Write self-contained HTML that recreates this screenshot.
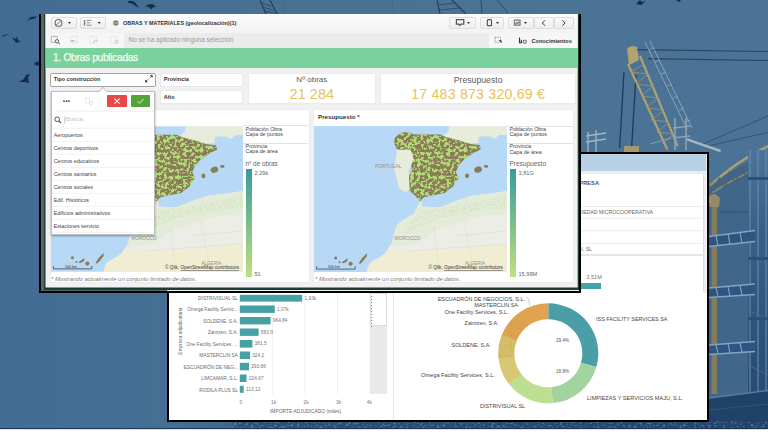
<!DOCTYPE html>
<html><head><meta charset="utf-8">
<style>
*{margin:0;padding:0;box-sizing:border-box}
html,body{width:768px;height:432px;overflow:hidden;background:#fff}
body{position:relative;font-family:"Liberation Sans",sans-serif;color:#333}
.a{position:absolute}
.t{position:absolute;white-space:nowrap;line-height:1}
.btn{border:1px solid #dcdcdc;border-radius:2px;background:linear-gradient(#fbfbfb,#ededed)}
</style></head><body>
<svg class="a" style="left:0;top:0" width="768" height="432" viewBox="0 0 768 432">
<defs>
 <linearGradient id="twr" x1="0" y1="0" x2="0" y2="1"><stop offset="0" stop-color="#4d7399"/><stop offset="0.3" stop-color="#36608a"/><stop offset="1" stop-color="#234670"/></linearGradient>
 <linearGradient id="bgg" x1="0" y1="0" x2="1" y2="0"><stop offset="0" stop-color="#426c93"/><stop offset="0.45" stop-color="#497294"/><stop offset="1" stop-color="#4a7396"/></linearGradient>
 <linearGradient id="bot" x1="0" y1="0" x2="1" y2="0"><stop offset="0" stop-color="#3b638b" stop-opacity="0"/><stop offset="0.105" stop-color="#3b638b" stop-opacity="0.6"/><stop offset="0.135" stop-color="#2c4f77"/><stop offset="1" stop-color="#22446c"/></linearGradient>
 <filter id="spk" x="0" y="0" width="1" height="1" color-interpolation-filters="sRGB">
  <feTurbulence type="fractalNoise" baseFrequency="0.35 0.6" numOctaves="2" seed="3" result="n"/>
  <feColorMatrix in="n" type="matrix" values="0 0 0 0 0.45  0 0 0 0 0.58  0 0 0 0 0.72  6 0 0 0 -3.2" result="g"/>
  <feComposite in="g" in2="SourceGraphic" operator="in"/>
 </filter>
</defs>
<rect x="0" y="0" width="768" height="430" fill="url(#bgg)"/>
<!-- birds -->
<g fill="#152d4b">
 <path d="M26.6 20.8 L31 17 L37 16.2 L35 18.5 L30 19.5Z"/>
 <path d="M2.3 36 Q5 33.6 9.3 34.5 L5 35.5 L3 37Z"/>
 <path d="M11.6 37 L16 39 L17 36 L18 40 L20.8 41.5 L16 42.8 L14 40Z"/>
 <path d="M33.6 64 L37 61.3 L40.5 63 L38 66Z"/>
 <path d="M18.5 82 L24 79 L26 75 L30 74 L28 78 L29 83 L24 82Z"/>
 <path d="M127.2 1.6 L131 0.8 L134.5 1.8 L137 5 L138.9 7.8 L135.5 6 L132 3.5 L129 3Z"/>
 <path d="M145.2 6 L149 4.2 L152.5 4 L156 6.5 L153 7.5 L151 9.5 L149.5 7.5Z"/>
 <path d="M636 4 L640 0 L642 2 L646 1 L641 5Z"/>
 <path d="M676 0 L681 0 L679 2Z"/>
</g>
<!-- top lattice towers -->
<g stroke="#22405f" stroke-width="1.2" fill="none">
 <path d="M260 0 L266 14 M270 0 L277 14"/>
 <path d="M261 3 L271 6 M262 7 L273 10 M264 11 L275 13" stroke-width="0.7"/>
 <path d="M437 0 L440 14 M452 0 L466 14"/>
 <path d="M438 5 L455 3 M439 10 L460 8" stroke-width="0.7"/>
 <path d="M481 0 L482 14 M497 0 L508 13" stroke-width="0.8"/>
 <path d="M283 0 L285 14 M392 0 L394 14" stroke="#3b6183" stroke-width="0.6"/>
</g>
<!-- right crane -->
<g fill="none">
 <path d="M636 49.6 L768 51.5 M648 58.6 L768 60.5" stroke="#2a4563" stroke-width="1.1"/>
 <path d="M624 72 L619.6 148 M636 75 L631.6 148" stroke="#1f3a5a" stroke-width="1.3"/>
 <path d="M628 64 L667.4 149.8 M640 56 L677.8 146.3" stroke="#b0a170" stroke-width="2.2"/>
 <path d="M631 72 L644 64 M631 72 L648 74 M636 84 L648 74 M636 84 L653 86 M641 96 L653 86 M641 96 L658 98 M646 108 L658 98 M646 108 L664 110 M651 120 L664 110 M651 120 L669 122 M657 132 L669 122 M657 132 L674 134 M662 144 L674 134" stroke="#9c9070" stroke-width="0.9"/>
 <path d="M645 42 L687 129 M650 41 L692 128" stroke="#9aaec0" stroke-width="0.8"/>
 <path d="M649 50 L654 48 M655 62 L660 60 M661 74 L666 72 M667 86 L672 84 M673 98 L678 96 M679 110 L684 108 M685 122 L690 120" stroke="#9aaec0" stroke-width="0.7"/>
 <path d="M703 144 L768 116 M708 146 L768 132.4 M720 212 L768 212" stroke="#2c4766" stroke-width="0.7"/>
 <path d="M650 144 L671 138" stroke="#8f9a98" stroke-width="1.2"/>
 <path d="M687 139.4 L720.6 151" stroke="#a8b4be" stroke-width="2.4"/>
 <path d="M586 136 L606 133 M586 142 L606 139 M596 130 L596 152 M588 132 L588 152" stroke="#a4b5c6" stroke-width="1.3"/>
 <path d="M675 118 L675 150 M686 118 L686 150 M673 128 L690 126 M673 138 L690 136" stroke="#8ea3b6" stroke-width="1.6"/>
</g>
<path d="M627 49 Q631 44 637 47 L639 60 L629 65Z" fill="#b3a272"/>
<path d="M624 146 L639 146 L639 152 L624 152Z" fill="#a69870"/>
<!-- arc lattice -->
<path d="M710 185.6 Q738 160 768 146.3" fill="none" stroke="#ab9f72" stroke-width="2.6"/>
<path d="M712.5 192.6 Q738 176 761 167" fill="none" stroke="#a49a72" stroke-width="1.8"/>
<path d="M714 191 L719 178 L725 188 L729 172 L736 183 L740 166 L747 178 L751 160 L757 172 L760 154" fill="none" stroke="#5d6a72" stroke-width="1.3"/>
<!-- darker overlay right lower -->
<path d="M700 190 L768 150 L768 430 L700 430Z" fill="#14305a" opacity="0.18"/>
<!-- tan column -->
<rect x="711.5" y="198" width="5.5" height="196" fill="#857c60"/>
<path d="M708 198 Q713 190 720 198 L719 207 L710 207Z" fill="#948a6a"/>
<!-- right tower -->
<rect x="748" y="150" width="20" height="280" fill="url(#twr)"/>
<path d="M750 150 L750 395 M758 150 L758 395 M766 145 L766 395" stroke="#6f8fae" stroke-width="1"/>
<path d="M748 165 L768 175 M748 195 L768 205 M748 255 L768 265 M748 310 L768 320 M748 365 L768 375" stroke="#4d6f92" stroke-width="0.8"/>
<g fill="#2c5079">
 <rect x="748" y="177" width="20" height="3"/><rect x="748" y="257" width="20" height="3"/><rect x="748" y="317" width="20" height="3"/>
</g>
<!-- horizontal arms -->
<g>
 <path d="M709 236 L755 230 L755 242 L709 247Z" fill="#2d5580"/>
 <path d="M709 236.5 L755 230.5 M709 246.5 L755 241.5" stroke="#86a4c1" stroke-width="1.6" fill="none"/>
 <path d="M716 235.6 L718 245.6 M728 234 L730 244.3 M740 232.5 L742 243" stroke="#86a4c1" stroke-width="1.1" fill="none"/>
 <path d="M709 287.5 L755 283.5 L755 295 L709 298Z" fill="#2d5580"/>
 <path d="M709 288 L755 284 M709 297.5 L755 294.5" stroke="#86a4c1" stroke-width="1.6" fill="none"/>
 <path d="M716 287.4 L718 297 M728 286.3 L730 296.2 M740 285.2 L742 295.4" stroke="#86a4c1" stroke-width="1.1" fill="none"/>
 <path d="M709 344.5 L755 341 L755 352 L709 355Z" fill="#2d5580"/>
 <path d="M709 345 L755 341.5 M709 354.5 L755 351.5" stroke="#86a4c1" stroke-width="1.6" fill="none"/>
 <path d="M716 344.4 L718 354 M728 343.5 L730 353.2 M740 342.6 L742 352.4" stroke="#86a4c1" stroke-width="1.1" fill="none"/>
</g>
<!-- base -->
<path d="M709 397.7 L768 390 L768 430 L709 430Z" fill="#204168"/>
<path d="M709 398 L768 390.5" stroke="#5a7c9e" stroke-width="1.4"/>
<path d="M709 410 L768 404" stroke="#2f5279" stroke-width="1.4"/>
<!-- bottom strip -->
<rect x="160" y="421" width="608" height="7.5" fill="url(#bot)"/>
<rect x="228" y="421" width="540" height="7.5" fill="#000" filter="url(#spk)" opacity="0.55"/>
<rect x="0" y="428.2" width="768" height="1" fill="#1a2f4a"/>
<rect x="0" y="429.2" width="768" height="2.8" fill="#ffffff"/>

</svg>
<!-- screenshot 2 (behind) -->
<div class="a" style="left:167px;top:152px;width:542px;height:269.8px;background:#000"></div>
<div class="a" style="left:169px;top:154px;width:537.5px;height:266px;background:#fff"></div>
<div class="a" style="left:0;top:0;width:768px;height:432px;clip-path:inset(154px 61.5px 12px 169px)">
<div class="a" style="left:0;top:0;width:768px;height:432px;background:#fff"></div>
<div class="a" style="left:160px;top:153px;width:560px;height:18.4px;background:#b9d1e6"></div>
<div class="a" style="left:160px;top:171.4px;width:560px;height:3px;background:#ececec"></div>
<div class="a" style="left:703.8px;top:171px;width:4px;height:122px;background:#ececec"></div>
<div class="a" style="left:703.3px;top:174.3px;width:0.7px;height:118px;background:#dedede"></div>
<div class="t" style="right:169px;top:181.3px;font-size:5.7px;font-weight:bold;color:#555">EMPRESA</div>
<svg class="a" style="left:0;top:0" width="768" height="432">
 <g stroke="#e4e4e4" stroke-width="0.7">
  <line x1="560" y1="206.5" x2="703" y2="206.5"/>
  <line x1="560" y1="218.3" x2="703" y2="218.3"/>
  <line x1="560" y1="230.8" x2="703" y2="230.8"/>
  <line x1="560" y1="243.3" x2="703" y2="243.3"/>
 </g>
 <line x1="560" y1="255" x2="703" y2="255" stroke="#dcdcdc" stroke-width="1.6"/>
</svg>
<div class="t" style="right:115px;top:209.6px;font-size:5.2px;color:#666">SOCIEDAD MICROCOOPERATIVA</div>
<div class="t" style="right:176px;top:246.8px;font-size:5.2px;color:#666">MAJU, SL</div>
<div class="t" style="left:586.3px;top:275px;font-size:5.6px;color:#777">3,51M</div>
<div class="a" style="left:560px;top:283px;width:41.3px;height:5.5px;background:#45a3a6"></div>
<!-- lower: bar chart -->
<div class="a" style="left:370px;top:293px;width:16.5px;height:33px;background:#fff;border:0.7px solid #ddd"></div>
<div class="a" style="left:370px;top:326px;width:16.5px;height:67.5px;background:#e9e9e9"></div>
<svg class="a" style="left:0;top:0" width="768" height="432">
 <line x1="371.6" y1="296" x2="371.6" y2="327" stroke="#4aa3a8" stroke-width="1" stroke-dasharray="1.2 1.8"/>
 <line x1="393.3" y1="293" x2="393.3" y2="419" stroke="#e0e0e0" stroke-width="0.8"/>
 <g stroke="#e4e4e4" stroke-width="0.6">
  <line x1="272.5" y1="293" x2="272.5" y2="394"/>
  <line x1="305" y1="293" x2="305" y2="394"/>
  <line x1="337.5" y1="293" x2="337.5" y2="394"/>
  <line x1="370" y1="293" x2="370" y2="394"/>
 </g>
 <g fill="#46a0a4">
  <rect x="239.8" y="294.8" width="62.4" height="6.8"/>
  <rect x="239.8" y="305.5" width="35" height="7.4"/>
  <rect x="239.8" y="317" width="30.8" height="7.4"/>
  <rect x="239.8" y="328.5" width="18.8" height="7.4"/>
  <rect x="239.8" y="340" width="12.6" height="7.6"/>
  <rect x="239.8" y="351.5" width="10.2" height="7.5"/>
  <rect x="239.8" y="362.8" width="9.2" height="7.5"/>
  <rect x="239.8" y="374.5" width="6.7" height="7.5"/>
  <rect x="239.8" y="385.8" width="3.9" height="7"/>
 </g>
</svg>
<div class="t" style="left:140px;width:97.9px;text-align:right;top:292.7px;font-size:4.8px;color:#6a6a6a;line-height:11.5px">DISTRIVISUAL SL<br>Omega Facility Servic...<br>SOLDENE, S.A.<br>Zaintzen, S.A.<br>One Facility Services, ...<br>MASTERCLIN SA<br>ESCUADRÓN DE NEG...<br>LIMCAMAR, S.L.<br>RODILA PLUS SL</div>
<div class="t" style="left:304.5px;top:296.7px;font-size:4.8px;color:#777">1,93k</div>
<div class="t" style="left:277px;top:307.7px;font-size:4.8px;color:#777">1,07k</div>
<div class="t" style="left:272.8px;top:319.3px;font-size:4.8px;color:#777">964,84</div>
<div class="t" style="left:260.8px;top:330.8px;font-size:4.8px;color:#777">583,9</div>
<div class="t" style="left:254.6px;top:342.4px;font-size:4.8px;color:#777">381,5</div>
<div class="t" style="left:252.2px;top:353.8px;font-size:4.8px;color:#777">324,2</div>
<div class="t" style="left:251.2px;top:365.1px;font-size:4.8px;color:#777">293,86</div>
<div class="t" style="left:248.9px;top:376.8px;font-size:4.8px;color:#777">224,67</div>
<div class="t" style="left:246px;top:387.9px;font-size:4.8px;color:#777">113,12</div>
<div class="t" style="left:181px;top:330.5px;font-size:4.5px;color:#666;transform:translate(-50%,-50%) rotate(-90deg);letter-spacing:0.1px">Empresa adjudicataria</div>
<div class="t" style="left:239.5px;top:400.9px;font-size:4.8px;color:#777">0</div>
<div class="t" style="left:271px;top:400.9px;font-size:4.8px;color:#777">1k</div>
<div class="t" style="left:303.5px;top:400.9px;font-size:4.8px;color:#777">2k</div>
<div class="t" style="left:336px;top:400.9px;font-size:4.8px;color:#777">3k</div>
<div class="t" style="left:366.8px;top:400.9px;font-size:4.8px;color:#777">4k</div>
<div class="t" style="left:270px;top:409.8px;font-size:4.9px;color:#666">IMPORTE ADJUDICADO (miles)</div>
<!-- donut -->
<svg class="a" style="left:0;top:0" width="768" height="432">
 <path d="M548.30 303.30 A50 50 0 0 1 596.36 367.08 L580.98 362.67 A34 34 0 0 0 548.30 319.30Z" fill="#4a9fa7"/>
 <path d="M596.36 367.08 A50 50 0 0 1 552.66 403.11 L551.26 387.17 A34 34 0 0 0 580.98 362.67Z" fill="#a3d39e"/>
 <path d="M552.66 403.11 A50 50 0 0 1 508.90 384.08 L521.51 374.23 A34 34 0 0 0 551.26 387.17Z" fill="#bcdf92"/>
 <path d="M508.90 384.08 A50 50 0 0 1 498.49 357.66 L514.43 356.26 A34 34 0 0 0 521.51 374.23Z" fill="#dbc673"/>
 <path d="M498.49 357.66 A50 50 0 0 1 501.94 334.57 L516.78 340.56 A34 34 0 0 0 514.43 356.26Z" fill="#d7bf66"/>
 <path d="M501.94 334.57 A50 50 0 0 1 548.30 303.30 L548.30 319.30 A34 34 0 0 0 516.78 340.56Z" fill="#e0a450"/>
 <line x1="498.49" y1="357.66" x2="514.43" y2="356.26" stroke="#b8a055" stroke-width="0.5"/>
 <line x1="510.00" y1="321.16" x2="522.25" y2="331.45" stroke="#d49a4a" stroke-width="0.5"/>
 <line x1="517.52" y1="313.90" x2="527.37" y2="326.51" stroke="#d89d4c" stroke-width="0.5"/>
 <line x1="501.94" y1="334.57" x2="516.78" y2="340.56" stroke="#cfa052" stroke-width="0.5"/>
 <defs><pattern id="dots" width="2.2" height="2.2" patternUnits="userSpaceOnUse"><circle cx="1.1" cy="1.1" r="0.45" fill="#9a7e3a" opacity="0.45"/></pattern></defs>
 <path d="M498.49 357.66 A50 50 0 0 1 517.52 313.90 L527.37 326.51 A34 34 0 0 0 514.43 356.26Z" fill="url(#dots)"/>
 <path d="M527 297 L529 300 L529.5 306" fill="none" stroke="#999" stroke-width="0.5"/>
</svg>
<div class="t" style="right:243px;top:296.57px;font-size:5.45px;color:#444">ESCUADRÓN DE NEGOCIOS, S.L.</div>
<div class="t" style="right:250px;top:302.82px;font-size:5.45px;color:#444">MASTERCLIN SA</div>
<div class="t" style="right:259.5px;top:310.07px;font-size:5.45px;color:#444">One Facility Services, S.L.</div>
<div class="t" style="right:269.25px;top:320.97px;font-size:5.45px;color:#444">Zaintzen, S.A.</div>
<div class="t" style="right:277.2px;top:342.82px;font-size:5.45px;color:#444">SOLDENE, S.A.</div>
<div class="t" style="right:273px;top:373.07px;font-size:5.65px;color:#444">Omega Facility Services, S.L.</div>
<div class="t" style="left:480px;top:403.57px;font-size:5.45px;color:#444">DISTRIVISUAL SL</div>
<div class="t" style="left:596px;top:317.07px;font-size:5.45px;color:#444">ISS FACILITY SERVICES SA</div>
<div class="t" style="left:587px;top:395.57px;font-size:5.6px;color:#444">LIMPIEZAS Y SERVICIOS MAJU, S.L.</div>
<div class="t" style="left:556px;top:339.00px;font-size:4.6px;color:#555">29.4%</div>
<div class="t" style="left:556px;top:369.60px;font-size:4.6px;color:#555">18.8%</div>
</div>

<!-- screenshot 1 (front) -->
<div class="a" style="left:39.2px;top:14px;width:541.8px;height:278.9px;background:#000"></div>
<div class="a" style="left:41.1px;top:14px;width:537.6px;height:277px;background:#56696a"></div>
<div class="a" style="left:167px;top:289.6px;width:411.6px;height:1.4px;background:#eef1ee"></div>
<div class="a" style="left:43.9px;top:14px;width:534.8px;height:275.6px;background:#1f3b33"></div>
<div class="a" style="left:0;top:0;width:768px;height:432px;clip-path:inset(14px 190.3px 144.4px 45.5px)">
<div class="a" style="left:0;top:0;width:768px;height:432px;background:#f1f1f1"></div>
<!-- toolbar -->
<div class="a" style="left:40px;top:13px;width:545px;height:19.5px;background:linear-gradient(#fdfdfd,#f2f2f2)"></div>
<div class="a btn" style="left:50.5px;top:17px;width:26px;height:11.8px"></div>
<div class="a btn" style="left:80px;top:17px;width:26px;height:11.8px"></div>
<div class="a btn" style="left:449px;top:16.5px;width:27px;height:12px"></div>
<div class="a btn" style="left:480px;top:16.5px;width:23.5px;height:12px"></div>
<div class="a btn" style="left:507.5px;top:16.5px;width:26.5px;height:12px"></div>
<div class="a btn" style="left:533.8px;top:16.5px;width:20.2px;height:12px"></div>
<div class="a btn" style="left:554px;top:16.5px;width:20px;height:12px"></div>
<svg class="a" style="left:0;top:0" width="768" height="60">
 <circle cx="58.5" cy="22.9" r="3.4" fill="none" stroke="#6a6a6a" stroke-width="1.1"/>
 <line x1="56.4" y1="25" x2="60.6" y2="20.8" stroke="#6a6a6a" stroke-width="1"/>
 <path d="M68 21.9 L71 21.9 L69.5 24Z" fill="#333"/>
 <path d="M84.5 20 v5.6" stroke="#777" stroke-width="1.3"/>
 <path d="M86.5 20.4 h5 M86.5 22.8 h3.5 M86.5 25.2 h5" stroke="#888" stroke-width="0.9"/>
 <path d="M97.7 21.9 L100.7 21.9 L99.2 24Z" fill="#333"/>
 <circle cx="115.8" cy="23" r="2.8" fill="#858585"/>
 <path d="M113.2 23 h5.2" stroke="#c8c8c8" stroke-width="0.7"/>
 <path d="M456.4 19.6 h7.4 v4.6 h-3 l-1.1 1.4 l-1.1 -1.4 h-2.2z" fill="none" stroke="#555" stroke-width="1.2"/>
 <path d="M467 21.9 L470 21.9 L468.5 24Z" fill="#333"/>
 <rect x="487.3" y="19.6" width="4.2" height="6" rx="0.9" fill="none" stroke="#555" stroke-width="1.2"/>
 <path d="M496 21.9 L499 21.9 L497.5 24Z" fill="#333"/>
 <path d="M514.3 20.1 h5.8 v5 h-5.8z M515.3 24 l1.6 -1.6 l1 1 l1.6 -1.6" fill="none" stroke="#777" stroke-width="1.1"/>
 <path d="M524 21.9 L527 21.9 L525.5 24Z" fill="#333"/>
 <path d="M545 20.3 l-2.6 2.7 l2.6 2.7" fill="none" stroke="#333" stroke-width="1"/>
 <path d="M562.5 20.3 l2.6 2.7 l-2.6 2.7" fill="none" stroke="#333" stroke-width="1"/>
</svg>
<div class="t" style="left:123px;top:21px;font-size:5.45px;font-weight:bold;color:#333">OBRAS Y MATERIALES (geolocalización)(1)</div>
<!-- selection bar -->
<div class="a" style="left:40px;top:32.5px;width:545px;height:15.5px;background:#f6f6f6"></div>
<div class="a" style="left:124px;top:32.5px;width:364.8px;height:15.5px;background:#ebebeb"></div>
<svg class="a" style="left:0;top:0" width="768" height="60">
 <rect x="51.3" y="36.4" width="6" height="6" fill="none" stroke="#666" stroke-width="0.7" stroke-dasharray="1.2 0.8"/>
 <circle cx="57" cy="41.3" r="1.7" fill="#f6f6f6" stroke="#555" stroke-width="0.9"/>
 <line x1="58.2" y1="42.5" x2="60" y2="44.2" stroke="#555" stroke-width="1"/>
 <rect x="70.5" y="36.4" width="7" height="6.6" fill="none" stroke="#d0d0d0" stroke-width="0.6" stroke-dasharray="1.2 0.8"/>
 <path d="M71 40.5 l1.8 1.5 M71 40.5 h3 l1.5 1.2" fill="none" stroke="#aaa" stroke-width="0.8"/>
 <rect x="89.8" y="36.4" width="7" height="6.6" fill="none" stroke="#d0d0d0" stroke-width="0.6" stroke-dasharray="1.2 0.8"/>
 <path d="M92.5 42.5 l3 -2.2 h2" fill="none" stroke="#aaa" stroke-width="0.8"/>
 <rect x="110.6" y="36.4" width="6.5" height="6.6" fill="none" stroke="#d4d4d4" stroke-width="0.6" stroke-dasharray="1.2 0.8"/>
 <circle cx="116.8" cy="41.8" r="1.6" fill="#f6f6f6" stroke="#bbb" stroke-width="0.8"/>
 <rect x="495" y="37.3" width="5.5" height="5" fill="none" stroke="#666" stroke-width="0.7" stroke-dasharray="1 0.7"/>
 <path d="M498.5 40 l3.2 3 l-0.2 -2.6 z" fill="#222"/>
 <path d="M519.5 37.6 v5.2 h2.5 M521.3 42.8 v-3" fill="none" stroke="#333" stroke-width="1.1"/>
 <rect x="523.2" y="40.2" width="3" height="3" rx="0.9" fill="none" stroke="#333" stroke-width="0.8"/>
</svg>
<div class="t" style="left:128.5px;top:36.6px;font-size:6.45px;color:#9a9a9a">No se ha aplicado ninguna selección</div>
<div class="t" style="left:531.5px;top:39.4px;font-size:5.6px;font-weight:bold;color:#333">Conocimientos</div>
<!-- green header -->
<div class="a" style="left:40px;top:48px;width:545px;height:19.6px;background:#79d29b"></div>
<div class="t" style="left:53px;top:52.5px;font-size:10.2px;color:#f2fbf4;letter-spacing:-0.3px;-webkit-text-stroke:0.25px #f2fbf4">1. Obras publicadas</div>
<!-- filters -->
<div class="a" style="left:50.3px;top:72.6px;width:106.2px;height:14.6px;background:#fff;border:1px solid #a3a3a3;border-radius:2px"></div>
<div class="t" style="left:53.7px;top:77.2px;font-size:5.4px;font-weight:bold;color:#333">Tipo construcción</div>
<svg class="a" style="left:0;top:0" width="768" height="100">
 <path d="M150 75.2 L152.6 75.2 L152.6 77.8Z M145.2 79.6 L145.2 82.2 L147.8 82.2Z" fill="#222"/><path d="M149.6 78.2 L152 75.8 M145.8 81.6 L148.2 79.2" stroke="#222" stroke-width="0.7"/>
</svg>
<div class="a" style="left:160px;top:72.8px;width:83px;height:14.1px;background:#fff;border:1px solid #e8e8e8"></div>
<div class="t" style="left:163.8px;top:76.6px;font-size:5.6px;font-weight:bold;color:#333">Provincia</div>
<div class="a" style="left:160px;top:90.4px;width:83px;height:13.8px;background:#fff;border:1px solid #e8e8e8"></div>
<div class="t" style="left:163.8px;top:94.7px;font-size:5.6px;font-weight:bold;color:#333">Año</div>
<!-- KPIs -->
<div class="a" style="left:247.7px;top:72.8px;width:128.3px;height:31.4px;background:#fff;border:1px solid #ebebeb"></div>
<div class="t" style="left:247.7px;width:128.3px;text-align:center;top:76.4px;font-size:8px;color:#5a5a5a">Nº obras</div>
<div class="t" style="left:247.7px;width:128.3px;text-align:center;top:87.4px;font-size:14.6px;color:#e9c25c">21 284</div>
<div class="a" style="left:380px;top:72.8px;width:196.3px;height:31.4px;background:#fff;border:1px solid #ebebeb"></div>
<div class="t" style="left:380px;width:196.3px;text-align:center;top:76.2px;font-size:8.7px;color:#5a5a5a">Presupuesto</div>
<div class="t" style="left:380px;width:196.3px;text-align:center;top:86.6px;font-size:14.2px;letter-spacing:0.2px;color:#e9c25c">17 483 873 320,69 €</div>
<svg class="a" style="left:0;top:0" width="768" height="300">
<defs>
 <filter id="mott" x="0" y="0" width="1" height="1" filterUnits="objectBoundingBox" color-interpolation-filters="sRGB">
  <feTurbulence type="fractalNoise" baseFrequency="0.3" numOctaves="2" seed="11" result="n"/>
  <feColorMatrix in="n" type="matrix" values="0 0 0 0 0.70  0 0 0 0 0.86  0 0 0 0 0.47  10 0 0 0 -4.8" result="g"/>
  <feComposite in="g" in2="SourceGraphic" operator="in"/>
 </filter>
 <clipPath id="spc"><path d="M80.8 12 L85.8 7.1 L92.7 6.1 L100 8.6 L126 8.6 L131 10.7 L144 14 L156.3 18 L165.6 19 L166.7 23.2 L158 28 L150 33.6 L145 39 L141.7 46.1 L144.8 52.4 L141 56 L138.9 60.8 L130.5 67 L120.1 69.1 L109.7 71.2 L106 75.3 L100.5 69.1 L94.6 64.2 L94.6 51.4 L97.6 42.5 L96.6 26.8 L86.7 24.8 L82.8 22.8 L79.9 17.2Z"/></clipPath>
 <linearGradient id="lg" x1="0" y1="0" x2="0" y2="1"><stop offset="0" stop-color="#3a9c9c"/><stop offset="1" stop-color="#b9e07c"/></linearGradient>
 <filter id="rough" x="0" y="0" width="1" height="1" color-interpolation-filters="sRGB">
  <feTurbulence type="fractalNoise" baseFrequency="0.5" numOctaves="2" seed="9" result="n"/>
  <feColorMatrix in="n" type="matrix" values="0 0 0 0 0.80  0 0 0 0 0.88  0 0 0 0 0.70  5 0 0 0 -2.2" result="g"/>
  <feComposite in="g" in2="SourceGraphic" operator="in"/>
 </filter>
 <g id="map">
  <rect x="0" y="0" width="193" height="146" fill="#b7d9f5"/>
  <!-- France -->
  <path d="M134.5 -1 L193 -1 L193 9 L184.7 9.1 L180.8 12.8 L176 10.5 L168.8 10.1 L164.3 11.5 L164.3 17 L150 17.5 L139 14 L129 10.1 L134.7 5Z" fill="#e7ecdd"/>
  <!-- Africa -->
  <path d="M193 65 L179.3 67 L156.6 70.1 L141 75.3 L125.3 81.5 L108.3 80.5 L107.1 74.8 L103.4 80.3 L99.7 87.7 L90.4 93.3 L83 98.8 L80.3 106.2 L77.5 117.3 L70.1 128.5 L60.8 134 L55.3 137.7 L53.4 143.3 L51.6 149 L193 149Z" fill="#ecede6"/>
  <path d="M193 65 L179.3 67 L156.6 70.1 L141 75.3 L125.3 81.5 L108.3 80.5 L107.1 74.8 L103.4 80.3 L99.7 87.7 L90.4 93.3 L83 98.8 L80.3 106.2 L77.5 117.3 L76 121 L100 118 L125 103 L160 92 L193 87Z" fill="#e4ebd8"/>
  <path d="M108 85 Q140 80 193 70 L193 82 Q150 86 122 94 Q104 100 88 110 Q96 94 108 85Z" fill="#dce7ca" filter="url(#rough)" opacity="0.6"/>
  <path d="M51.6 149 L53.4 143.3 L55.3 137.7 L60.8 134 L70.1 128.5 L74 123 Q110 130 193 117 L193 149Z" fill="#f1edd2"/>
  <path d="M120 100 L125 146 M150 95 L160 146 M95 125 L193 118 M140 110 L193 105" fill="none" stroke="#dedbc8" stroke-width="0.5"/>
  <!-- Spain -->
  <path d="M80.8 12 L85.8 7.1 L92.7 6.1 L100 8.6 L126 8.6 L131 10.7 L144 14 L156.3 18 L165.6 19 L166.7 23.2 L158 28 L150 33.6 L145 39 L141.7 46.1 L144.8 52.4 L141 56 L138.9 60.8 L130.5 67 L120.1 69.1 L109.7 71.2 L106 75.3 L100.5 69.1 L94.6 64.2 L94.6 51.4 L97.6 42.5 L96.6 26.8 L86.7 24.8 L82.8 22.8 L79.9 17.2Z" fill="#8a7c56"/>
  <path d="M80.8 12 L85.8 7.1 L92.7 6.1 L100 8.6 L126 8.6 L131 10.7 L144 14 L156.3 18 L165.6 19 L166.7 23.2 L158 28 L150 33.6 L145 39 L141.7 46.1 L144.8 52.4 L141 56 L138.9 60.8 L130.5 67 L120.1 69.1 L109.7 71.2 L106 75.3 L100.5 69.1 L94.6 64.2 L94.6 51.4 L97.6 42.5 L96.6 26.8 L86.7 24.8 L82.8 22.8 L79.9 17.2Z" fill="#000" filter="url(#mott)"/>
  <!-- Portugal -->
  <path d="M82.8 23.8 L96.6 23.8 L99.5 32.7 L94.6 44.5 L95.6 64.2 L90.7 66.1 L84.8 62.2 L81.8 48.4 L79.9 42.5 L81.8 32.7Z" fill="#e8ecdc"/>
  <!-- islands -->
  <ellipse cx="164" cy="43.6" rx="3.9" ry="3" fill="#8a7c56" transform="rotate(-20 164 43.6)"/>
  <ellipse cx="172" cy="40.4" rx="2.2" ry="1.4" fill="#8a7c56"/>
  <ellipse cx="153" cy="49.8" rx="2" ry="2.4" fill="#8a7c56"/>
  <circle cx="21.5" cy="131.9" r="1.5" fill="#8a7c56"/><circle cx="25.5" cy="136.2" r="1" fill="#8a7c56"/>
  <path d="M27.4 136.5 L31 134 L33.8 132.2 L33 135.5 L29.5 137.2Z" fill="#8a7c56"/><circle cx="36.5" cy="137.8" r="2.1" fill="#8a7c56"/>
  <path d="M44.6 137.2 L48 132 L51 129 L53.2 127.2 L52.5 130.5 L49.5 134.5 L46.5 137.8Z" fill="#8a7c56"/>
  <text x="61" y="41.8" font-size="4.8" fill="#8f8f8f" font-family="Liberation Sans">PORTUGAL</text>
  <text x="80.5" y="114.2" font-size="4.8" fill="#8f8f8f" font-family="Liberation Sans">MOROCCO</text>
  <text x="151" y="139" font-size="4.6" fill="#8f8f8f" font-family="Liberation Sans">ALGERIA</text>
  <path d="M2.5 140.3 v2.8 h38.5 v-2.8" fill="none" stroke="#555" stroke-width="0.9"/>
  <text x="14" y="142" font-size="3.6" fill="#333" font-family="Liberation Sans">500 km</text>
  <text x="114.5" y="143.4" font-size="4.7" fill="#333" font-family="Liberation Sans">© Qlik, <tspan text-decoration="underline">OpenStreetMap contributors</tspan></text>
 </g>
</defs>
</svg>
<!-- panel 1 -->
<div class="a" style="left:50px;top:108.5px;width:259.5px;height:174.1px;background:#fff;border:1px solid #ececec"></div>
<svg class="a" style="left:50.7px;top:125.5px" width="192.3" height="146" viewBox="0 0 193 146"><use href="#map"/></svg>
<div class="a" style="left:243px;top:142.5px;width:65px;height:0.8px;background:#e2e2e2"></div>
<div class="a" style="left:243px;top:125.3px;width:65px;height:0.8px;background:#e2e2e2"></div>
<div class="t" style="left:245.5px;top:126.5px;font-size:5.3px;color:#444;line-height:5.6px">Población Obra<br>Capa de puntos</div>
<div class="t" style="left:245.5px;top:143.5px;font-size:5.3px;color:#444;line-height:5.9px">Provincia<br>Capa de área</div>
<div class="t" style="left:245.5px;top:160.6px;font-size:6.35px;color:#666">nº de obras</div>
<div class="a" style="left:245.7px;top:169px;width:6px;height:107.7px;background:linear-gradient(#389b9b,#bde27c)"></div>
<div class="t" style="left:254.5px;top:170.5px;font-size:5.6px;color:#666">2,29k</div>
<div class="t" style="left:254.5px;top:271.8px;font-size:5.6px;color:#666">51</div>
<div class="t" style="left:51px;top:277.3px;font-size:5.9px;color:#777;font-style:italic">* Mostrando actualmente un conjunto limitado de datos.</div>
<!-- panel 2 -->
<div class="a" style="left:313.3px;top:108.5px;width:260.7px;height:174.1px;background:#fff;border:1px solid #ececec"></div>
<div class="t" style="left:318px;top:114.3px;font-size:6.2px;font-weight:bold;color:#333">Presupuesto *</div>
<svg class="a" style="left:314px;top:125.8px" width="193.2" height="146" viewBox="0 0 193 146"><use href="#map"/></svg>
<div class="a" style="left:507.2px;top:142.6px;width:66px;height:0.8px;background:#e2e2e2"></div>
<div class="a" style="left:507.2px;top:125.5px;width:66px;height:0.8px;background:#e2e2e2"></div>
<div class="t" style="left:509.5px;top:126.6px;font-size:5.3px;color:#444;line-height:5.6px">Población Obra<br>Capa de puntos</div>
<div class="t" style="left:509.5px;top:143.6px;font-size:5.3px;color:#444;line-height:5.9px">Provincia<br>Capa de área</div>
<div class="t" style="left:509.5px;top:161px;font-size:6.5px;color:#666">Presupuesto</div>
<div class="a" style="left:509.8px;top:169.2px;width:6px;height:107.5px;background:linear-gradient(#389b9b,#bde27c)"></div>
<div class="t" style="left:518.5px;top:170.6px;font-size:5.6px;color:#666">3,81G</div>
<div class="t" style="left:518.5px;top:271.8px;font-size:5.6px;color:#666">15,99M</div>
<div class="t" style="left:315px;top:277.3px;font-size:5.9px;color:#777;font-style:italic">* Mostrando actualmente un conjunto limitado de datos.</div>

<div class="a" style="left:50.5px;top:90.5px;width:104.2px;height:144.3px;background:#fff;border:1px solid #bdbdbd;box-shadow:0 1px 2px rgba(0,0,0,0.35)"></div>
<div class="a" style="left:99.6px;top:87.6px;width:6px;height:6px;background:#fff;border-left:1px solid #c9c9c9;border-top:1px solid #c9c9c9;transform:rotate(45deg)"></div>
<div class="t" style="left:62.5px;top:96.5px;font-size:10px;font-weight:bold;color:#444;letter-spacing:-0.8px">···</div>
<svg class="a" style="left:0;top:0" width="200" height="240">
 <rect x="85.5" y="98" width="4" height="5" fill="none" stroke="#ddd" stroke-width="0.6"/>
 <circle cx="91" cy="103" r="1.6" fill="none" stroke="#ccc" stroke-width="0.6"/>
 <line x1="55" y1="111.2" x2="154" y2="111.2" stroke="#e6e6e6" stroke-width="0.7"/>
 <circle cx="57.2" cy="119.3" r="2.3" fill="none" stroke="#555" stroke-width="1"/>
 <line x1="58.9" y1="121" x2="61" y2="123" stroke="#555" stroke-width="1.1"/>
 <line x1="64.8" y1="116.5" x2="64.8" y2="123.5" stroke="#888" stroke-width="0.5"/>
 <g stroke="#e8e8e8" stroke-width="0.6">
  <line x1="52" y1="128.2" x2="153" y2="128.2"/>
  <line x1="52" y1="141.3" x2="153" y2="141.3"/>
  <line x1="52" y1="154.3" x2="153" y2="154.3"/>
  <line x1="52" y1="167.3" x2="153" y2="167.3"/>
  <line x1="52" y1="180.3" x2="153" y2="180.3"/>
  <line x1="52" y1="193.3" x2="153" y2="193.3"/>
  <line x1="52" y1="206.3" x2="153" y2="206.3"/>
  <line x1="52" y1="219.3" x2="153" y2="219.3"/>
  <line x1="52" y1="232.3" x2="153" y2="232.3"/>
 </g>
</svg>
<div class="a" style="left:107.3px;top:95.3px;width:19.5px;height:11.7px;background:#e8484a;border-radius:1px"></div>
<div class="a" style="left:130.7px;top:95.3px;width:19.5px;height:11.7px;background:#52a638;border-radius:1px"></div>
<svg class="a" style="left:0;top:0" width="200" height="120">
 <path d="M114.5 98.6 L119.6 103.7 M119.6 98.6 L114.5 103.7" stroke="#fff" stroke-width="1.1"/>
 <path d="M137.5 101.3 L139.6 103.3 L143.6 99" fill="none" stroke="#e8f5e0" stroke-width="0.9"/>
</svg>
<div class="t" style="left:66px;top:117px;font-size:5.8px;color:#c4c4c4">Buscar</div>
<div class="t" style="left:53.7px;top:129.1px;font-size:5.3px;color:#3f3f3f;line-height:13px">Aeropuertos<br>Centros deportivos<br>Centros educativos<br>Centros sanitarios<br>Centros sociales<br>Edif. Históricos<br>Edificios administrativos<br>Estaciones servicio</div>

</div>

</body></html>
